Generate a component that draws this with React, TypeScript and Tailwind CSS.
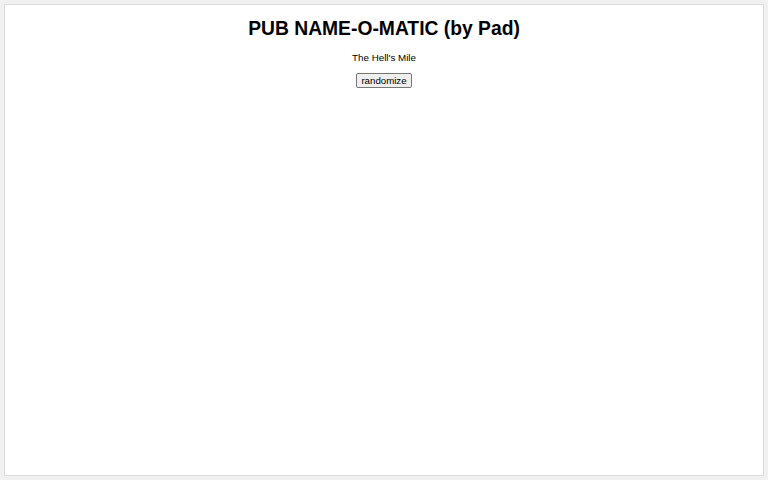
import { useState } from "react";

const FIRST = ["The Hell's", "The Red", "The Golden", "The Drunken", "The Old"];
const SECOND = ["Mile", "Lion", "Anchor", "Goose", "Crown"];

export default function App() {
  const [name, setName] = useState("The Hell's Mile");

  const randomize = () => {
    const a = FIRST[Math.floor(Math.random() * FIRST.length)];
    const b = SECOND[Math.floor(Math.random() * SECOND.length)];
    setName(`${a} ${b}`);
  };

  return (
    <div className="h-[480px] bg-[#f1f1f1] p-[4px] font-['Liberation_Sans',Arial,sans-serif] text-black">
      <div className="h-[472px] border border-[#dcdcdc] bg-white flex flex-col items-center">
        <h1 className="mt-[13px] text-[19.3px] leading-[22px] font-bold">
          PUB NAME-O-MATIC (by Pad)
        </h1>
        <p className="mt-[12px] text-[9.8px] leading-[12px]">{name}</p>
        <button
          onClick={randomize}
          className="mt-[9px] h-[15px] px-[4px] text-[9.7px] leading-[12px] bg-[#efefef] border border-[#767676] rounded-[2px]"
        >
          randomize
        </button>
      </div>
    </div>
  );
}
